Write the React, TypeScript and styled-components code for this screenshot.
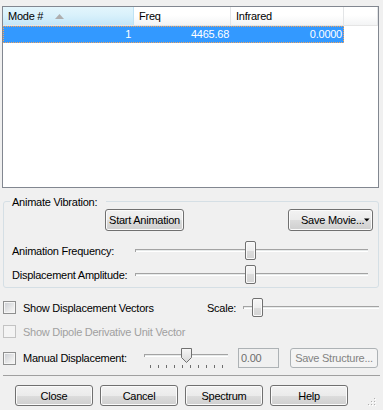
import React from 'react'
import styled, { createGlobalStyle } from 'styled-components'

const GlobalStyle = createGlobalStyle`
  html, body {
    margin: 0;
    padding: 0;
    background: #f0f0f0;
  }
  body {
    font-family: "Liberation Sans", Arial, sans-serif;
    font-size: 11px;
    letter-spacing: -0.25px;
    color: #000;
  }
  * {
    box-sizing: border-box;
  }
`

const Window = styled.div`
  width: 383px;
  height: 410px;
  overflow: hidden;
  display: flex;
  flex-direction: column;
`

/* ---- list view ---- */

const ListView = styled.div`
  margin: 6px 4px 0 2px;
  height: 182px;
  flex: 0 0 182px;
  border: 1px solid #828790;
  background: #fff;
`

const HeaderRow = styled.div`
  display: flex;
  height: 19px;
  border-bottom: 1px solid #e5e5e5;
`

const HeaderCell = styled.div<{ $w?: number; $sorted?: boolean }>`
  flex: ${(p) => (p.$w ? `0 0 ${p.$w}px` : '1 1 auto')};
  display: flex;
  align-items: center;
  padding-left: 5px;
  background: ${(p) =>
    p.$sorted
      ? 'linear-gradient(#e3f5fc, #d9f1fb 45%, #c5e7f8)'
      : 'linear-gradient(#ffffff, #ffffff 45%, #f3f4f5)'};
  border-right: 1px solid ${(p) => (p.$sorted ? '#c0e3f5' : '#e3e5e7')};
`

const SortArrow = styled.svg`
  margin-left: 12px;
  width: 9px;
  height: 5px;
`

const ItemRow = styled.div`
  display: flex;
  width: 341px;
  height: 17px;
  background: #3399ff;
  color: #fff;
  outline: 1px dotted #f3a35c;
  outline-offset: -1px;
`

const Cell = styled.div<{ $w: number; $pr: number }>`
  flex: 0 0 ${(p) => p.$w}px;
  text-align: right;
  padding-right: ${(p) => p.$pr}px;
  line-height: 17px;
`

/* ---- buttons ---- */

const Button = styled.div<{ $w: number; $h?: number; $disabled?: boolean }>`
  flex: 0 0 ${(p) => p.$w}px;
  width: ${(p) => p.$w}px;
  height: ${(p) => p.$h ?? 21}px;
  display: flex;
  align-items: center;
  justify-content: center;
  border: 1px solid ${(p) => (p.$disabled ? '#adb2b5' : '#707070')};
  border-radius: 3px;
  color: ${(p) => (p.$disabled ? '#838383' : '#000')};
  background: ${(p) =>
    p.$disabled
      ? '#f4f4f4'
      : 'linear-gradient(#f2f2f2 0%, #ebebeb 50%, #dddddd 50%, #cfcfcf 100%)'};
  box-shadow: ${(p) => (p.$disabled ? 'none' : 'inset 0 0 0 1px #fbfbfb')};
  white-space: nowrap;
`

const SplitButton = styled(Button)`
  justify-content: space-between;
  padding: 0 2px 0 12px;
`

/* ---- group box ---- */

const GroupBox = styled.fieldset`
  margin: 5px 4px 0 3px;
  padding: 0 0 3px;
  border: 1px solid #d5dfe5;
  border-radius: 3px;
  min-width: 0;
`

const GroupTitle = styled.legend`
  margin-left: 6px;
  padding: 3px 9px 0 2px;
  line-height: 13px;
`

const ActionRow = styled.div`
  display: flex;
  justify-content: space-between;
  height: 22px;
  padding: 0 5px 0 101px;
`

const SliderRow = styled.div<{ $mt: number }>`
  display: grid;
  grid-template-columns: 123px 233px;
  align-items: center;
  height: 19px;
  margin-top: ${(p) => p.$mt}px;
  padding-left: 8px;
`

/* ---- trackbar ---- */

const SliderBox = styled.div<{ $mt?: number }>`
  display: flex;
  flex-direction: column;
  align-self: ${(p) => (p.$mt !== undefined ? 'flex-start' : 'center')};
  margin-top: ${(p) => p.$mt ?? 0}px;
`

const Track = styled.div<{ $w: number }>`
  position: relative;
  width: ${(p) => p.$w}px;
  height: 3px;
  background: linear-gradient(#a3a3a3 0 1px, #e7eaea 1px 2px, #ffffff 2px 3px);
  border-left: 1px solid #a3a3a3;
`

const Thumb = styled.div`
  position: absolute;
  top: -8px;
  width: 11px;
  height: 19px;
  border: 1px solid #707070;
  border-radius: 2px;
  background: linear-gradient(#f7f7f7, #ededed 50%, #dcdcdc 50%, #d4d4d4);
  box-shadow: inset 0 0 0 1px #fafafa;
`

const PointerThumb = styled.svg`
  position: absolute;
  top: -6px;
  width: 11px;
  height: 15px;
`

const Ticks = styled.svg`
  margin: 8px 0 0 6px;
  width: 73px;
  height: 3px;
`

type SliderProps = { width: number; value: number; pointer?: boolean; ticks?: number; mt?: number }

const Slider = ({ width, value, pointer, ticks, mt }: SliderProps) => (
  <SliderBox $mt={mt}>
    <Track $w={width}>
      {pointer ? (
        <PointerThumb style={{ left: value - 1 }} viewBox="0 0 11 15">
          <defs>
            <linearGradient id="pt" x1="0" y1="0" x2="0" y2="1">
              <stop offset="0" stopColor="#f7f7f7" />
              <stop offset="1" stopColor="#d8d8d8" />
            </linearGradient>
          </defs>
          <path d="M0.5 0.5 H10.5 V9.5 L5.5 14.5 L0.5 9.5 Z" fill="url(#pt)" stroke="#707070" />
        </PointerThumb>
      ) : (
        <Thumb style={{ left: value - 1 }} />
      )}
    </Track>
    {ticks ? (
      <Ticks viewBox="0 0 73 3">
        {Array.from({ length: ticks }).map((_, i) => (
          <rect key={i} x={i * 8} y={0} width={1} height={3} fill="#6e6e6e" />
        ))}
      </Ticks>
    ) : null}
  </SliderBox>
)

/* ---- options below the group ---- */

const OptionRow = styled.div<{ $mt: number; $h: number }>`
  display: flex;
  align-items: center;
  height: ${(p) => p.$h}px;
  margin-top: ${(p) => p.$mt}px;
  padding-left: 3px;
`

const CheckBox = styled.span<{ $disabled?: boolean }>`
  flex: 0 0 13px;
  height: 13px;
  border: 1px solid ${(p) => (p.$disabled ? '#c3c3c3' : '#8e8f8f')};
  background: ${(p) =>
    p.$disabled ? '#f4f4f4' : 'linear-gradient(135deg, #c9ccd1, #eeeeee 70%, #f6f6f6)'};
  box-shadow: inset 0 0 0 1px ${(p) => (p.$disabled ? '#f4f4f4' : '#f5f5f5')};
`

const CheckText = styled.span<{ $w?: number; $disabled?: boolean }>`
  margin-left: 7px;
  flex: 0 0 ${(p) => (p.$w ? `${p.$w}px` : 'auto')};
  color: ${(p) => (p.$disabled ? '#a0a0a0' : '#000')};
  white-space: nowrap;
`

const FieldLabel = styled.span<{ $w: number }>`
  flex: 0 0 ${(p) => p.$w}px;
  white-space: nowrap;
`

const TextBox = styled.div`
  flex: 0 0 41px;
  height: 20px;
  margin-left: 10px;
  border: 1px solid #adb2b5;
  background: #f0f0f0;
  color: #6d6d6d;
  padding-left: 2px;
  line-height: 18px;
`

const Gap = styled.div<{ $w: number }>`
  flex: 0 0 ${(p) => p.$w}px;
`

const Separator = styled.div`
  margin: 7px 3px 0 3px;
  height: 1px;
  flex: 0 0 1px;
  background: #a0a0a0;
`

const Footer = styled.div`
  display: flex;
  gap: 7px;
  margin-top: 9px;
  padding: 0 7px 0 15px;
`

const Grip = styled.svg`
  margin-left: auto;
  align-self: flex-end;
  width: 8px;
  height: 8px;
`

const gripDots = [
  [6, 0],
  [3, 3],
  [6, 3],
  [0, 6],
  [3, 6],
  [6, 6],
]

export default function App() {
  return (
    <Window>
      <GlobalStyle />
      <ListView>
        <HeaderRow>
          <HeaderCell $w={131} $sorted>
            Mode #
            <SortArrow viewBox="0 0 9 5">
              <path d="M0 5 L4.5 0 L9 5 Z" fill="#aeaeae" />
            </SortArrow>
          </HeaderCell>
          <HeaderCell $w={97}>Freq</HeaderCell>
          <HeaderCell $w={113}>Infrared</HeaderCell>
          <HeaderCell />
        </HeaderRow>
        <ItemRow>
          <Cell $w={131} $pr={3}>1</Cell>
          <Cell $w={97} $pr={2}>4465.68</Cell>
          <Cell $w={113} $pr={2}>0.0000</Cell>
        </ItemRow>
      </ListView>

      <GroupBox>
        <GroupTitle>Animate Vibration:</GroupTitle>
        <ActionRow>
          <Button $w={79} $h={22}>Start Animation</Button>
          <SplitButton $w={85} $h={22}>
            Save Movie...
            <svg width="7" height="4" viewBox="0 0 7 4">
              <path d="M0 0 H7 L3.5 4 Z" fill="#000" />
            </svg>
          </SplitButton>
        </ActionRow>
        <SliderRow $mt={10}>
          <span>Animation Frequency:</span>
          <Slider width={233} value={110} />
        </SliderRow>
        <SliderRow $mt={5}>
          <span>Displacement Amplitude:</span>
          <Slider width={233} value={110} />
        </SliderRow>
      </GroupBox>

      <OptionRow $mt={10} $h={19}>
        <CheckBox />
        <CheckText $w={184}>Show Displacement Vectors</CheckText>
        <FieldLabel $w={36}>Scale:</FieldLabel>
        <Slider width={136} value={9} />
      </OptionRow>

      <OptionRow $mt={8} $h={13}>
        <CheckBox $disabled />
        <CheckText $disabled>Show Dipole Derivative Unit Vector</CheckText>
      </OptionRow>

      <OptionRow $mt={10} $h={20}>
        <CheckBox />
        <CheckText $w={121}>Manual Displacement:</CheckText>
        <Slider width={84} value={37} pointer ticks={10} mt={6} />
        <TextBox>0.00</TextBox>
        <Gap $w={11} />
        <Button $w={88} $h={20} $disabled>Save Structure...</Button>
      </OptionRow>

      <Separator />

      <Footer>
        <Button $w={78}>Close</Button>
        <Button $w={78}>Cancel</Button>
        <Button $w={78}>Spectrum</Button>
        <Button $w={78}>Help</Button>
        <Grip viewBox="0 0 8 8">
          {gripDots.map(([x, y]) => (
            <g key={`${x}-${y}`}>
              <rect x={x + 1} y={y + 1} width={1} height={1} fill="#ffffff" />
              <rect x={x} y={y} width={1} height={1} fill="#b0b0b0" />
            </g>
          ))}
        </Grip>
      </Footer>
    </Window>
  )
}
